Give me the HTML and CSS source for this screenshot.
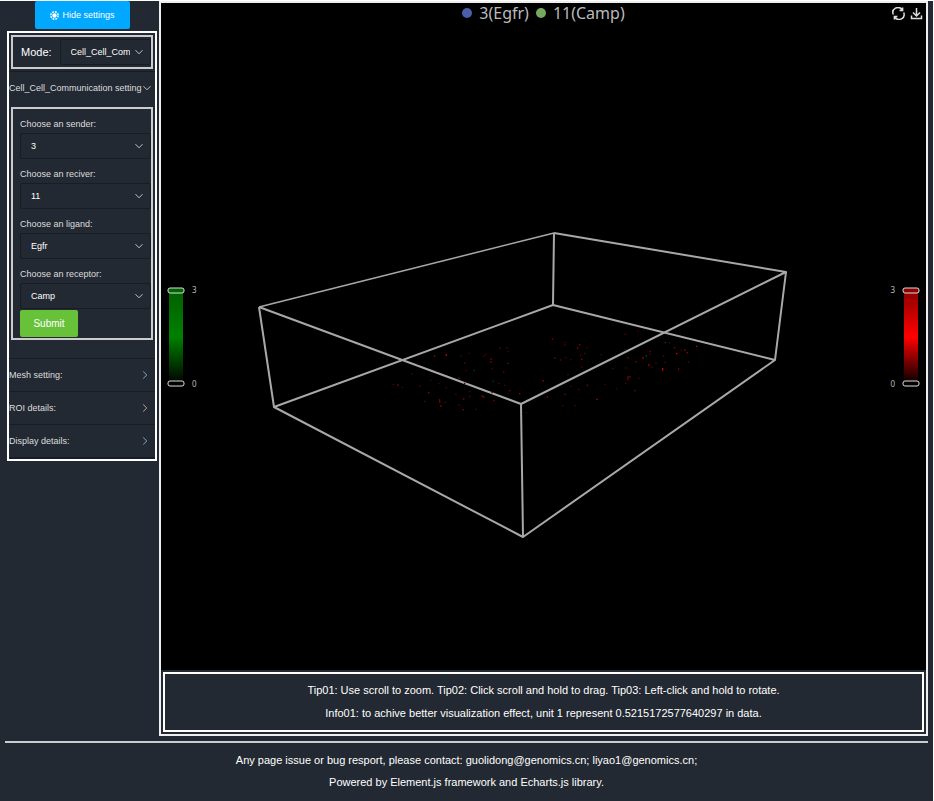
FILE: index.html
```html
<!DOCTYPE html>
<html lang="en">
<head>
<meta charset="utf-8">
<title>Cell Cell Communication</title>
<link rel="stylesheet" href="styles.css">
</head>
<body>
<div class="page">
  <aside class="side">
    <button class="btn btn-hide" type="button">
      <svg width="9" height="9" viewBox="0 0 9 9" aria-hidden="true"><circle cx="4.500" cy="4.500" r="3.700" fill="none" stroke="#fff" stroke-width="1.400" stroke-dasharray="1.900 1"/><circle cx="4.500" cy="4.500" r="2.200" fill="#fff"/></svg>
      Hide settings
    </button>
    <div class="panel">
      <div class="card mode">
        <label for="mode">Mode:</label>
        <div class="pick">
          <select id="mode"><option>Cell_Cell_Communication</option></select>
          <svg class="chev" viewBox="0 0 8 8"><path d="M.5 2.200 4 5.800 7.500 2.200"/></svg>
        </div>
      </div>
      <button class="fold open" type="button"><span>Cell_Cell_Communication setting</span><svg class="chev" viewBox="0 0 8 8"><path d="M.5 2.200 4 5.800 7.500 2.200"/></svg></button>
      <form class="card fields">
        <label for="sender">Choose an sender:</label>
        <div class="pick"><select id="sender"><option>3</option></select><svg class="chev" viewBox="0 0 8 8"><path d="M.5 2.200 4 5.800 7.500 2.200"/></svg></div>
        <label for="reciver">Choose an reciver:</label>
        <div class="pick"><select id="reciver"><option>11</option></select><svg class="chev" viewBox="0 0 8 8"><path d="M.5 2.200 4 5.800 7.500 2.200"/></svg></div>
        <label for="ligand">Choose an ligand:</label>
        <div class="pick"><select id="ligand"><option>Egfr</option></select><svg class="chev" viewBox="0 0 8 8"><path d="M.5 2.200 4 5.800 7.500 2.200"/></svg></div>
        <label for="receptor">Choose an receptor:</label>
        <div class="pick"><select id="receptor"><option>Camp</option></select><svg class="chev" viewBox="0 0 8 8"><path d="M.5 2.200 4 5.800 7.500 2.200"/></svg></div>
        <button class="btn btn-submit" type="button">Submit</button>
      </form>
      <button class="fold" type="button"><span>Mesh setting:</span><svg class="chev blue" viewBox="0 0 8 8"><path d="M2.200.5 5.800 4 2.200 7.500"/></svg></button>
      <button class="fold" type="button"><span>ROI details:</span><svg class="chev tan" viewBox="0 0 8 8"><path d="M2.200.5 5.800 4 2.200 7.500"/></svg></button>
      <button class="fold" type="button"><span>Display details:</span><svg class="chev blue" viewBox="0 0 8 8"><path d="M2.200.5 5.800 4 2.200 7.500"/></svg></button>
    </div>
  </aside>
  <main class="main">
    <div class="stage">
      <svg class="scene" viewBox="161 3 765 667" role="img" aria-label="3D scatter">
        <g fill="none" stroke="#a8a8a8" stroke-width="2" stroke-linejoin="round">
          <path d="M554 233 786 272 521 404 259 307"/>
          <path d="M274 407 553 305 775 360 523 537Z"/>
          <path d="M259 307 274 407M554 233 553 305M786 272 775 360M521 404 523 537"/>
          <path stroke-width="1.500" d="M259 307 554 233"/>
        </g>
        <g transform="translate(380 320) scale(.3333)" fill="none" stroke-width="4">
          <path stroke="#5c0000" d="M111 132h4M241 108h4M265 100h4M252 129h4M256 152h4M310 108h4M316 103h4M358 84h4M379 84h4M383 95h4M335 145h4M369 156h4M515 57h4M523 115h4M95 161h4M38 193h4M64 202h4M117 198h4M151 181h4M168 153h4M174 191h4M197 203h4M226 223h4M267 215h4M267 230h4M132 244h4M194 247h4M236 255h4M355 190h4M372 196h4M500 231h4M437 278h4M286 268h4M252 190h4M334 218h4"/>
          <path stroke="#960000" d="M162 108h4M331 117h4M331 126h4M52 195h4M144 218h4M235 174h4M249 237h4M305 228h4M309 231h4M340 242h4M387 212h4M417 221h4M488 182h4M177 240h4M177 246h4M181 258h4M248 269h4"/>
          <path stroke="#f00" d="M197 105h4"/>
          <path stroke="#004a00" d="M280 152h4M382 130h4M338 184h4"/>
        </g>
        <g transform="translate(540 320) scale(.3333)" fill="none" stroke-width="4">
          <path stroke="#5c0000" d="M36 57h4M73 68h4M73 75h4M140 83h4M132 100h4M120 106h4M42 114h4M60 120h4M75 113h4M92 119h4M181 104h4M124 141h4M82 164h4M90 199h4M20 230h4M66 258h4M102 256h4M114 208h4M192 193h4M227 206h4M216 146h4M256 144h4M255 191h4M295 175h4M253 43h4M293 34h4M254 88h4M328 102h4M346 129h4M334 141h4M374 128h4M368 108h4M387 68h4M422 91h4M444 126h4"/>
          <path stroke="#960000" d="M117 74h4M111 84h4M123 118h4M8 182h4M73 223h4M140 196h4M262 114h4M286 125h4M328 94h4M262 171h4M268 171h4M262 177h4M283 212h4M440 98h4M432 90h4M414 147h4M402 83h4"/>
          <path stroke="#d00000" d="M169 238h4M307 114h4M325 135h4M366 146h4M366 150h4M408 101h4M468 79h4"/>
          <path stroke="#005500" d="M374 68h4M317 108h4"/>
        </g>
      </svg>
      <div class="legend">
        <span class="key blue-dot">3(Egfr)</span>
        <span class="key green-dot">11(Camp)</span>
      </div>
      <div class="tools">
        <button type="button" aria-label="Restore"><svg width="13" height="13" viewBox="0 0 13 13"><path d="M1.300 7.500A5 5 0 0 1 10 2.700M11.700 5.500A5 5 0 0 1 3 10.300M10.600.500V3.500H7.600M2.400 12.500V9.500H5.400"/></svg></button>
        <button type="button" aria-label="Save"><svg width="13" height="13" viewBox="0 0 13 13"><path d="M6.500 1V8.500M3 5.500 6.500 9 10 5.500M1.500 8.500V11.500H11.500V8.500"/></svg></button>
      </div>
      <div class="scale scale-left">
        <svg width="18" height="100" viewBox="0 0 18 100" aria-hidden="true">
          <defs><linearGradient id="g" x2="0" y2="1"><stop offset="0" stop-color="#006000"/><stop offset=".5" stop-color="#008000"/><stop offset="1"/></linearGradient></defs>
          <path fill="url(#g)" d="M2 3h14v94H2z"/>
          <rect x="1" y="1" width="16" height="5" rx="2" fill="#006400" stroke="#ddd"/>
          <rect x="1" y="94" width="16" height="5" rx="2" stroke="#ddd"/>
        </svg>
        <div class="ends"><span>3</span><span>0</span></div>
      </div>
      <div class="scale scale-right">
        <svg width="18" height="100" viewBox="0 0 18 100" aria-hidden="true">
          <defs><linearGradient id="r" x2="0" y2="1"><stop offset="0" stop-color="#8b0000"/><stop offset=".5" stop-color="#f00"/><stop offset="1"/></linearGradient></defs>
          <path fill="url(#r)" d="M2 3h14v94H2z"/>
          <rect x="1" y="1" width="16" height="5" rx="2" fill="#8b0000" stroke="#ddd"/>
          <rect x="1" y="94" width="16" height="5" rx="2" stroke="#ddd"/>
        </svg>
        <div class="ends"><span>3</span><span>0</span></div>
      </div>
    </div>
    <div class="tips">
      <p>Tip01: Use scroll to zoom. Tip02: Click scroll and hold to drag. Tip03: Left-click and hold to rotate.</p>
      <p>Info01: to achive better visualization effect, unit 1 represent 0.5215172577640297 in data.</p>
    </div>
  </main>
</div>
<footer class="foot">
  <p>Any page issue or bug resport, please contact: guolidong@genomics.cn; liyao1@genomics.cn;</p>
  <p>Powered by Element.js framework and Echarts.js library.</p>
</footer>
</body>
</html>
```
FILE: styles.css
```css
* { box-sizing: border-box; }
body {
  margin: 0;
  min-height: 100vh;
  display: flex;
  flex-direction: column;
  background: #232932;
  border-top: 1px solid #fff;
  border-right: 1px solid #fff;
  color: #fff;
  font: 11px/22px "Liberation Sans", Arial, sans-serif;
}
p { margin: 0; }
button, select { font: inherit; color: inherit; }
.page { flex: 1; display: flex; padding-right: 5px; }
.side {
  flex: none;
  width: 159px;
  padding: 0 2px 0 7px;
}
.btn {
  display: flex;
  align-items: center;
  justify-content: center;
  border: 0;
  border-radius: 2px;
  font-size: 10px;
  line-height: 12px;
}
.btn-hide {
  gap: 3px;
  width: 95px;
  height: 28px;
  padding: 0;
  margin: 0 auto 2px 28px;
  background: #00a8ff;
  font-size: 9px;
}
.panel { border: 2px solid #fff; padding-top: 2px; }
.card { border: 2px solid #ccc; margin: 0 2px; }
.mode {
  display: flex;
  align-items: center;
  gap: 8px;
  padding: 2px 0 2px 8px;
}
.pick { position: relative; flex: 1; min-width: 0; }
.pick select {
  display: block;
  width: 100%;
  height: 26px;
  padding: 0 20px 0 10px;
  border: 1px solid #171c25;
  border-radius: 2px;
  background: transparent;
  appearance: none;
  font-size: 9px;
}
.chev {
  width: 8px;
  height: 8px;
  flex: none;
  fill: none;
  stroke: #c0c4cc;
}
.pick .chev {
  position: absolute;
  right: 8px;
  top: 9px;
  pointer-events: none;
}
.chev.blue { stroke: #7fa8cc; }
.chev.tan { stroke: #c0a890; }
.fold {
  display: flex;
  align-items: center;
  justify-content: space-between;
  width: 100%;
  height: 33px;
  padding: 0 6px 0 0;
  border: 0;
  border-top: 1px solid #171c25;
  background: none;
  color: #ddd;
  font-size: 9px;
  white-space: nowrap;
}
.fold:last-child { height: 35px; border-bottom: 2px solid #171c25; }
.fold.open { height: 36px; margin-top: 2px; padding-right: 4px; padding-bottom: 4px; }
.fields {
  padding: 7px 0 1px 7px;
  margin-bottom: 18px;
  color: #ddd;
  font-size: 9px;
}
.fields label { display: block; line-height: 16px; }
.fields .pick { margin: 1px 0 7px; color: #fff; }
.fields .pick:last-of-type { margin-bottom: 1px; }
.btn-submit {
  width: 58px;
  height: 27px;
  background: #67c23a;
  color: #fff;
}
.main {
  flex: 1;
  min-width: 0;
  display: flex;
  flex-direction: column;
  border: 2px solid #eee;
}
.stage {
  position: relative;
  flex: 1;
  display: grid;
  background: #000;
  color: #bbb;
}
.scene { width: 100%; height: 100%; }
.legend {
  position: absolute;
  top: 0;
  left: 0;
  right: 0;
  display: flex;
  justify-content: center;
  gap: 7px;
  font: 16px/20px "Noto Sans", "Open Sans", sans-serif;
}
.key { display: flex; align-items: center; gap: 7px; }
.key::before {
  content: "";
  width: 10px;
  height: 10px;
  border-radius: 50%;
  background: #4a5fa8;
}
.green-dot::before { background: #78a860; }
.tools {
  position: absolute;
  top: 4px;
  right: 3px;
  display: flex;
  gap: 5px;
}
.tools button { display: flex; padding: 0; border: 0; background: none; }
.tools path { fill: none; stroke: #ddd; stroke-width: 1.500; }
.scale {
  position: absolute;
  top: 50%;
  transform: translateY(-50%);
  display: flex;
  gap: 7px;
}
.scale-left { left: 6px; }
.scale-right { right: 6px; flex-direction: row-reverse; }
.ends {
  display: flex;
  flex-direction: column;
  justify-content: space-between;
  font: 8px/6px "Noto Sans", sans-serif;
}
.tips {
  margin: 2px;
  padding: 5px 0;
  border: 2px solid #fff;
  text-align: center;
  line-height: 23px;
}
.foot {
  margin: 5px 5px 0;
  padding: 6px 0 9px;
  border-top: 2px solid #ccc;
  text-align: center;
}
```
